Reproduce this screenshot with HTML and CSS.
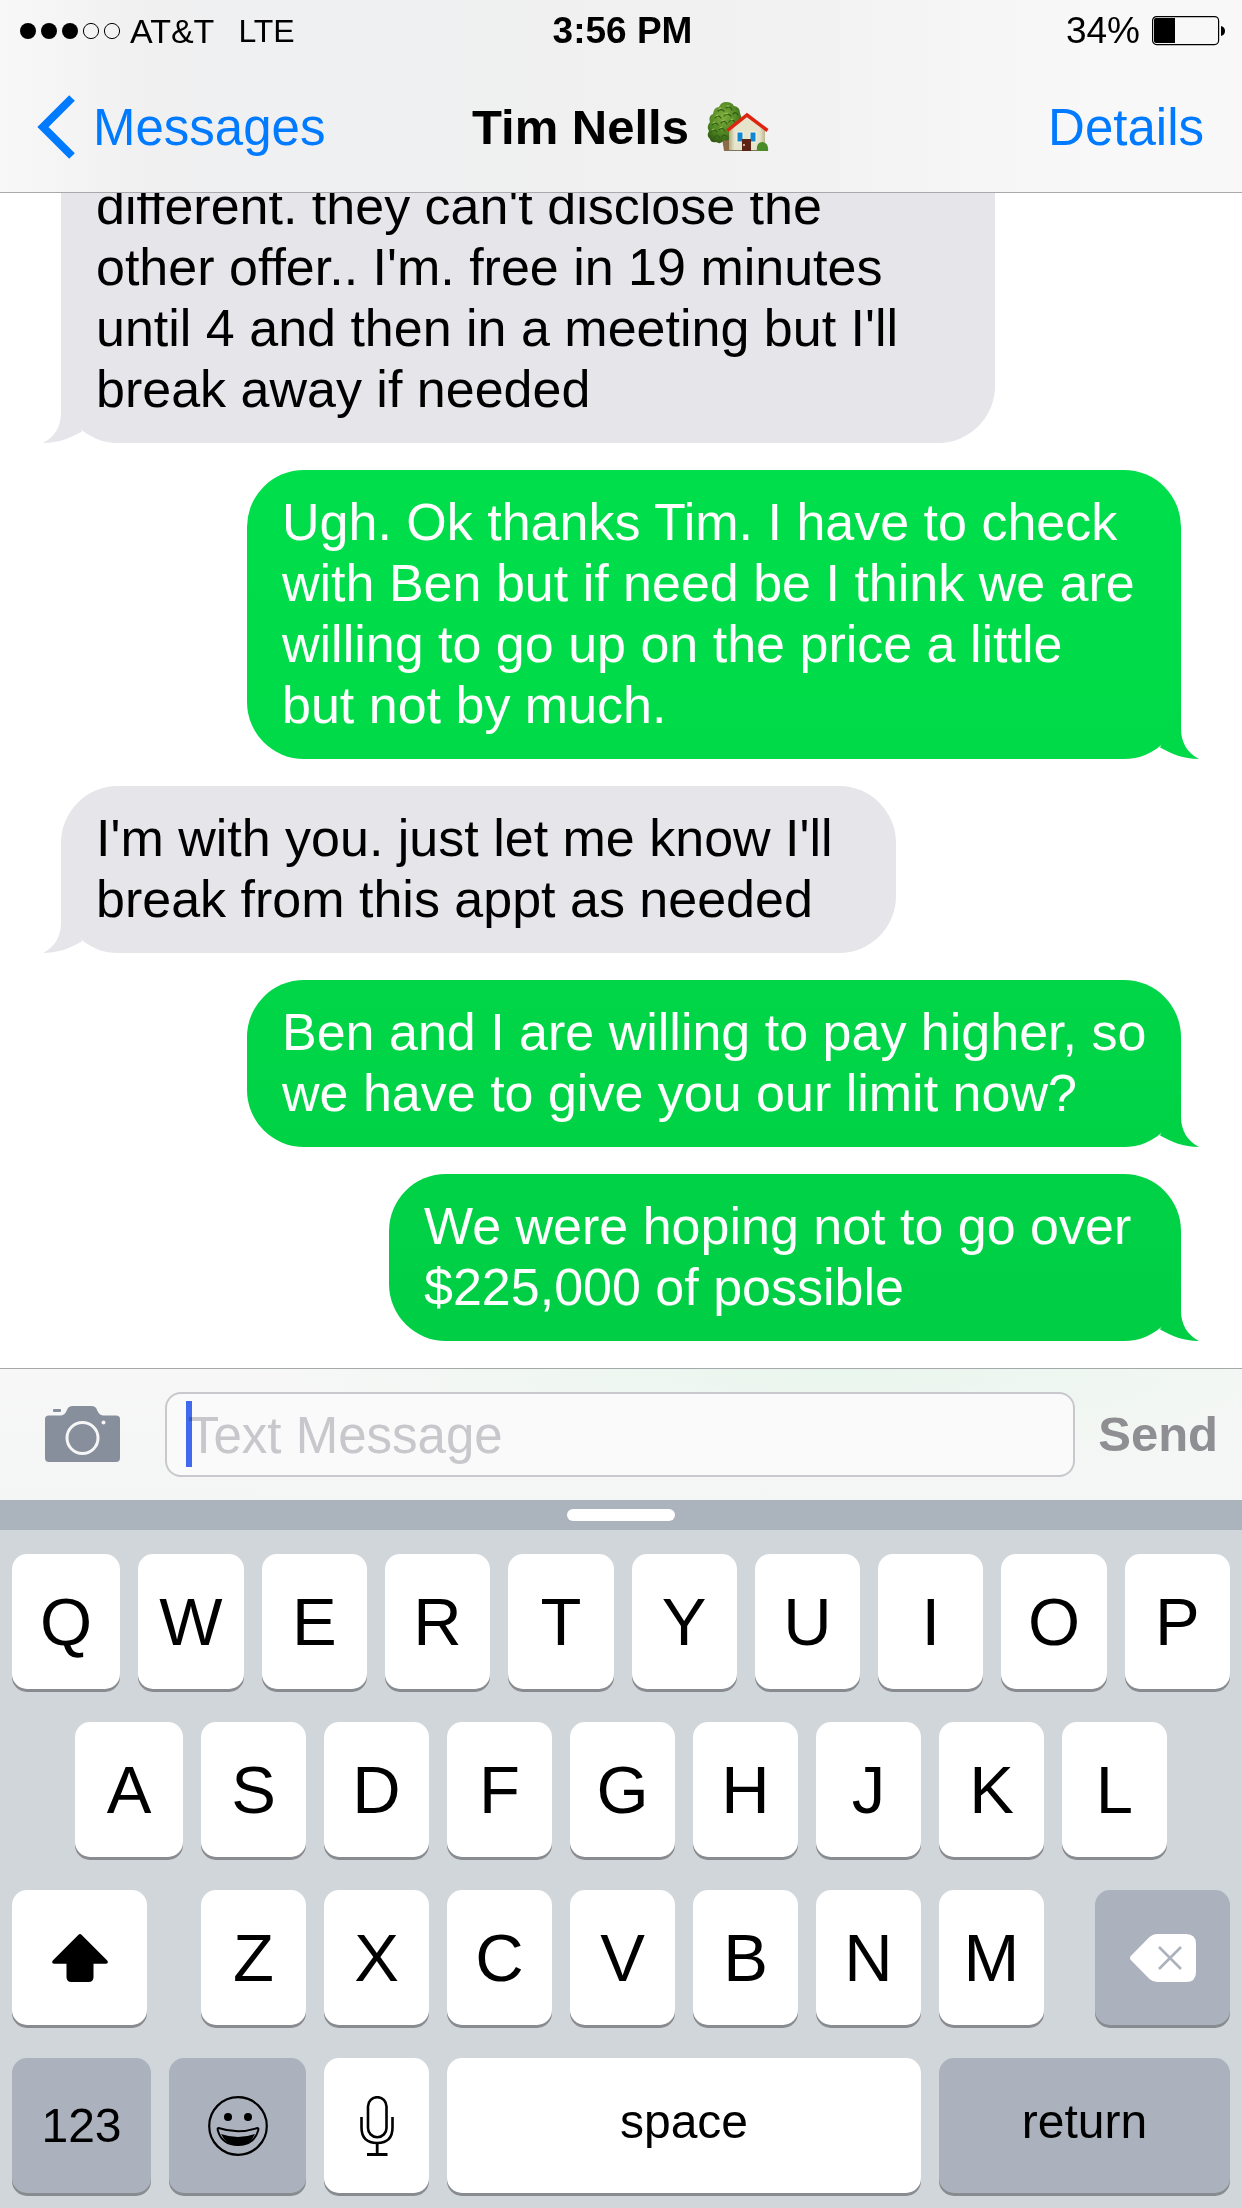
FILE: index.html
```html
<!DOCTYPE html>
<html lang="en">
<head>
<meta charset="utf-8">
<meta name="viewport" content="width=device-width, initial-scale=1">
<title>Tim Nells</title>
<link rel="stylesheet" href="styles.css">
</head>
<body>
<svg class="sprite" aria-hidden="true">
  <symbol id="tail-left" viewBox="0 0 40 56"><path d="M18 0 V26 C18 39 12 50 0 56 C16 56 27 51 39 44.500 Z"/></symbol>
  <symbol id="tail-right" viewBox="0 0 40 56"><path d="M22 0 V26 C22 39 28 50 40 56 C24 56 13 51 1 44.500 Z"/></symbol>
</svg>
<div class="phone">
  <header class="top">
    <div class="status">
      <div class="status-left">
        <svg class="signal" viewBox="0 0 102 18" role="img" aria-label="Signal: 3 of 5">
          <circle cx="9" cy="9" r="8"/><circle cx="30" cy="9" r="8"/><circle cx="51" cy="9" r="8"/>
          <circle class="hollow" cx="72" cy="9" r="7.600"/><circle class="hollow" cx="93" cy="9" r="7.600"/>
        </svg>
        <span class="carrier">AT&amp;T</span>
        <span class="network">LTE</span>
      </div>
      <span class="clock">3:56 PM</span>
      <div class="status-right">
        <span>34%</span>
        <svg class="battery" viewBox="0 0 74 30" role="img" aria-label="Battery">
          <rect x="0.600" y="0.600" width="66" height="28" rx="4" fill="none" stroke="#000" stroke-width="1.200"/>
          <path d="M4 2H23V27H4Q2 27 2 25V4Q2 2 4 2Z"/><path d="M69 10Q73 11 73 15Q73 19 69 20Z"/>
        </svg>
      </div>
    </div>
    <nav class="nav">
      <a class="back" href="#">
        <svg class="chevron" viewBox="0 0 40 64" aria-hidden="true"><path d="M35 3L6 32L35 61" fill="none" stroke="currentColor" stroke-width="8"/></svg>
        <span>Messages</span>
      </a>
      <h1 class="title">
        <span>Tim Nells</span>
        <svg class="house" viewBox="0 0 62 50" role="img" aria-label="House with garden">
          <defs>
            <radialGradient id="leaf" cx=".45" cy=".35" r=".7"><stop offset="0" stop-color="#7fae3c"/><stop offset=".6" stop-color="#4f8522"/><stop offset="1" stop-color="#2c5411"/></radialGradient>
            <linearGradient id="wall" x1="0" x2="1"><stop offset="0" stop-color="#b3ad83"/><stop offset=".15" stop-color="#e6e4cb"/><stop offset=".85" stop-color="#e6e4cb"/><stop offset="1" stop-color="#bdb78e"/></linearGradient>
          </defs>
          <path d="M15 36H23V49H17Z" fill="#8b6b45"/>
          <path d="M19 0Q25 0 27 4Q33 5 33 11Q36 18 34 25L24 34Q22 40 17 38Q14 43 9 40Q4 41 3 37Q-1 34 2 29Q-1 24 3 20Q1 14 6 12Q7 5 12 5Q14 0 19 0Z" fill="url(#leaf)"/>
          <g fill="none" stroke="#2f5a14" stroke-width="1.200" stroke-linecap="round">
            <path d="M11 9Q14 6 17 9M19 6Q23 3 25 8M8 16Q11 12 14 16M17 14Q20 10 24 14M26 12Q29 9 31 13M5 23Q8 19 11 23M14 21Q17 17 20 22M22 20Q25 16 28 20M4 30Q7 26 10 30M12 28Q15 24 18 29M7 36Q10 31 13 36M15 35Q17 31 20 35"/>
          </g>
          <g fill="none" stroke="#a5cc5d" stroke-width="1" stroke-linecap="round">
            <path d="M12 7L14 6M20 4H22M9 14L11 13M18 12L21 11M6 21L8 20M15 19L17 18M24 18L26 17M5 28L7 27M13 26L15 25"/>
          </g>
          <path d="M22 27L40 12L58 27V49H22Z" fill="url(#wall)"/>
          <path d="M21 48.500H60" stroke="#7a7658"/>
          <path d="M20.500 28.500L40 13L60.500 28.500" fill="none" stroke="#e02311" stroke-width="3.500"/>
          <path d="M30 30H36V40H30ZM43 30H49V40H43Z" fill="#1187d4" stroke="#f6f5e6"/>
          <path d="M35 37H44V49H35Z" fill="#5b2414"/><circle cx="37" cy="43" r="1" fill="#f3dcc0"/>
          <path d="M50 49Q49 40 55.500 40Q62 41 61 49Z" fill="#4a8b2a"/>
        </svg>
      </h1>
      <a class="details" href="#">Details</a>
    </nav>
  </header>

  <main class="chat">
    <div class="bubble in wide continued">
      <p>different. they can't disclose the<br>other offer.. I'm. free in 19 minutes<br>until 4 and then in a meeting but I'll<br>break away if needed</p>
      <svg class="tail"><use href="#tail-left"/></svg>
    </div>
    <div class="bubble out wide shade-1">
      <p>Ugh. Ok thanks Tim. I have to check<br>with Ben but if need be I think we are<br>willing to go up on the price a little<br>but not by much.</p>
      <svg class="tail"><use href="#tail-right"/></svg>
    </div>
    <div class="bubble in medium">
      <p>I'm with you. just let me know I'll<br>break from this appt as needed</p>
      <svg class="tail"><use href="#tail-left"/></svg>
    </div>
    <div class="bubble out wide shade-2">
      <p>Ben and I are willing to pay higher, so<br>we have to give you our limit now?</p>
      <svg class="tail"><use href="#tail-right"/></svg>
    </div>
    <div class="bubble out short shade-3">
      <p>We were hoping not to go over<br>$225,000 of possible</p>
      <svg class="tail"><use href="#tail-right"/></svg>
    </div>
  </main>

  <form class="composer">
    <button class="camera" type="button" aria-label="Camera">
      <svg viewBox="0 0 75 57" aria-hidden="true">
        <path d="M4 9.500H16Q20 9 22 4Q23 0 28 0H46Q51 0 52 4Q54 9 58 9.500H71Q75 9.500 75 13V52Q75 56 71 56H4Q0 56 0 52V13Q0 9.500 4 9.500Z"/>
        <rect x="8" y="3" width="8" height="3" rx="1"/>
        <circle cx="37.500" cy="32" r="15.500" fill="none" stroke="#f6f6f6" stroke-width="3"/>
        <circle cx="58.500" cy="16.500" r="2" fill="#f6f6f6"/>
      </svg>
    </button>
    <div class="field">
      <input type="text" aria-label="Text Message" placeholder="Text Message">
      <span class="caret"></span>
    </div>
    <button class="send" type="button">Send</button>
  </form>

  <div class="grabber"><span></span></div>

  <section class="keyboard" aria-label="Keyboard">
    <div class="row">
      <button class="key">Q</button><button class="key">W</button><button class="key">E</button><button class="key">R</button><button class="key">T</button><button class="key">Y</button><button class="key">U</button><button class="key">I</button><button class="key">O</button><button class="key">P</button>
    </div>
    <div class="row inset">
      <button class="key">A</button><button class="key">S</button><button class="key">D</button><button class="key">F</button><button class="key">G</button><button class="key">H</button><button class="key">J</button><button class="key">K</button><button class="key">L</button>
    </div>
    <div class="row-shift">
      <button class="key" aria-label="Shift">
        <svg class="icon-shift" viewBox="0 0 56 48" aria-hidden="true"><path d="M26.500 .800Q28 -.600 29.500 .800L55.200 26.500Q57 29.500 54 29.800H41.500V43Q41.500 48 36.500 48H19.500Q14.500 48 14.500 43V29.800H2Q-1 29.500 .800 26.500Z"/></svg>
      </button>
      <div class="letters">
        <button class="key">Z</button><button class="key">X</button><button class="key">C</button><button class="key">V</button><button class="key">B</button><button class="key">N</button><button class="key">M</button>
      </div>
      <button class="key dark" aria-label="Delete">
        <svg class="icon-delete" viewBox="0 0 66 48" aria-hidden="true"><path d="M.800 22L19.500 3Q23 0 27 0H56Q66 0 66 10V38Q66 48 56 48H27Q23 48 19.500 45L.800 26Q-.800 24 .800 22Z" fill="#fff"/><path d="M29 13L51 35M51 13L29 35" stroke="#abb2bd" stroke-width="2.600"/></svg>
      </button>
    </div>
    <div class="row-bottom">
      <button class="key dark word">123</button>
      <button class="key dark" aria-label="Emoji">
        <svg class="icon-emoji" viewBox="0 0 60 60" aria-hidden="true"><circle cx="30" cy="30" r="28.800" fill="none" stroke="#000" stroke-width="2.200"/><circle cx="20" cy="21" r="4"/><circle cx="40" cy="21" r="4"/><path d="M10.500 32Q30 38.500 49.500 32Q51 32 50 35C47 45 40 49 30 49S13 45 10 35Q9 32 10.500 32Z" fill="none" stroke="#000" stroke-width="2"/><path d="M13 38Q30 44 47 38Q42 49.500 30 49.500Q18 49.500 13 38Z"/></svg>
      </button>
      <button class="key" aria-label="Dictate">
        <svg class="icon-mic" viewBox="0 0 34 60" aria-hidden="true"><g fill="none" stroke="#000"><rect x="8" y="1.200" width="18.500" height="40" rx="9.250" stroke-width="2.600"/><path d="M1.500 21V31.500Q1.500 47 17.200 47Q32.500 47 32.500 31.500V21" stroke-width="2.600"/><path d="M17.200 47V58M7 58.500H27.500" stroke-width="2.800"/></g></svg>
      </button>
      <button class="key word lifted">space</button>
      <button class="key dark word lifted">return</button>
    </div>
  </section>
</div>
</body>
</html>
```
FILE: styles.css
```css
* { box-sizing: border-box; }

body {
  margin: 0;
  background: #fff;
  color: #000;
  font-family: "Liberation Sans", Arial, Helvetica, sans-serif;
  font-size: 51px;
  line-height: 61px;
}

button, input {
  margin: 0;
  padding: 0;
  border: 0;
  background: none;
  color: inherit;
  font: inherit;
}

a { color: #007aff; text-decoration: none; }
svg { display: block; }
.sprite { position: absolute; width: 0; height: 0; }

.phone {
  display: flex;
  flex-direction: column;
  min-height: 100vh;
}

/* Header */
.top {
  position: relative;
  z-index: 1;
  height: 193px;
  border-bottom: 1px solid #a9a9ac;
  background: linear-gradient(90deg, #f8f8f8 0, #f0f0f1 12%, #eff0f2 30%, #f0f0f0 45%, #f2f2f3 65%, #f8f8f8 88%);
}

.status, .nav {
  display: grid;
  grid-template-columns: 1fr auto 1fr;
  align-items: center;
}

.status {
  height: 62px;
  padding: 0 16px 0 19px;
  font-size: 37px;
  line-height: 62px;
}

.status-left, .status-right { display: flex; align-items: center; }
.status-left { font-size: 34px; }
.status-right { justify-content: flex-end; gap: 12px; }
.signal { width: 102px; height: 18px; }
.hollow { fill: none; stroke: #000; }
.carrier { margin-left: 9px; }
.network { margin-left: 24px; font-size: 32px; }
.clock { font-weight: 700; }
.battery { width: 74px; height: 30px; }

.nav { height: 130px; padding: 0 38px 0 37px; }
.back { display: flex; align-items: center; gap: 16px; }
.chevron { width: 40px; height: 64px; }
.title {
  display: flex;
  align-items: center;
  gap: 18px;
  margin: 0;
  font-size: 49px;
  font-weight: 700;
}
.house { width: 62px; height: 50px; }
.details { justify-self: end; }

/* Conversation */
.chat {
  display: flex;
  flex: 1 1 0;
  flex-direction: column;
  justify-content: flex-end;
  gap: 27px;
  overflow: hidden;
  padding: 0 61px 27px;
  font-size: 52px;
}

.bubble {
  position: relative;
  flex: none;
  padding: 22px 35px 23px;
  border-radius: 57px;
  white-space: nowrap;
}
.bubble p { margin: 0; }

.in { align-self: flex-start; background: #e5e5ea; --tail: #e5e5ea; }
.out { align-self: flex-end; background: var(--tail); color: #fff; }
.continued { border-top-left-radius: 0; border-top-right-radius: 0; }

.wide { width: 934px; }
.medium { width: 835px; }
.short { width: 792px; }

.shade-1 { --tail: #00da48; background: linear-gradient(#00de4b, #00da48); }
.shade-2 { --tail: #00d246; background: linear-gradient(#00d648, #00d246); }
.shade-3 { --tail: #00ce45; background: linear-gradient(#00d246, #00ce45); }

.tail {
  position: absolute;
  bottom: 0;
  width: 40px;
  height: 56px;
  fill: var(--tail);
}
.in .tail { left: -18px; }
.out .tail { right: -18px; }

/* Message entry */
.composer {
  display: flex;
  align-items: center;
  height: 132px;
  padding: 0 24px 0 45px;
  border-top: 1px solid #a6a9a9;
  background: radial-gradient(ellipse 45% 80% at 68% 0, #e9f6ed, transparent), linear-gradient(#f7f7f7, #f4f6f5);
}
.camera { width: 75px; fill: #868f9b; }
.field {
  position: relative;
  flex: 1;
  margin: 0 23px 0 45px;
}
.field input {
  display: block;
  width: 100%;
  height: 85px;
  padding: 2px 21px 0;
  border: 2px solid #c8c8cd;
  border-radius: 16px;
  outline: 0;
  background: #fafafa;
}
.field input::placeholder { color: #c7c7cc; opacity: 1; }
.caret {
  position: absolute;
  top: 9px;
  left: 21px;
  width: 6px;
  height: 66px;
  background: #426bf2;
  mix-blend-mode: multiply;
}
.send { color: #8e8e93; font-size: 49px; font-weight: 700; }

.grabber {
  display: flex;
  align-items: center;
  justify-content: center;
  height: 30px;
  background: #abb3bd;
}
.grabber span { width: 108px; height: 12px; border-radius: 6px; background: #fff; }

/* Keyboard */
.keyboard {
  display: flex;
  flex-direction: column;
  gap: 33px;
  padding: 24px 12px 15px;
  background: #d1d6da;
}
.row, .letters { display: flex; gap: 18px; }
.row .key, .letters .key { flex: 105 1 0; }
.row .key:first-child { flex-grow: 108; }
.inset { padding: 0 63px; }
.row-shift { display: grid; grid-template-columns: 135fr 846fr 135fr; gap: 51px; }
.letters { padding-left: 3px; }
.row-bottom { display: grid; grid-template-columns: 139fr 137fr 105fr 474fr 291fr; gap: 18px; }

.key {
  display: flex;
  align-items: center;
  justify-content: center;
  min-width: 0;
  height: 135px;
  border-radius: 15px;
  background: #fff;
  box-shadow: 0 3px 0 #888b8f;
  font-size: 67px;
}
.dark { background: #abb2bd; }
.word { font-size: 48px; }
.lifted { padding-bottom: 8px; }

.icon-shift { width: 56px; height: 48px; }
.icon-delete { width: 66px; height: 48px; }
.icon-emoji { width: 60px; height: 60px; }
.icon-mic { width: 34px; height: 60px; }
```
